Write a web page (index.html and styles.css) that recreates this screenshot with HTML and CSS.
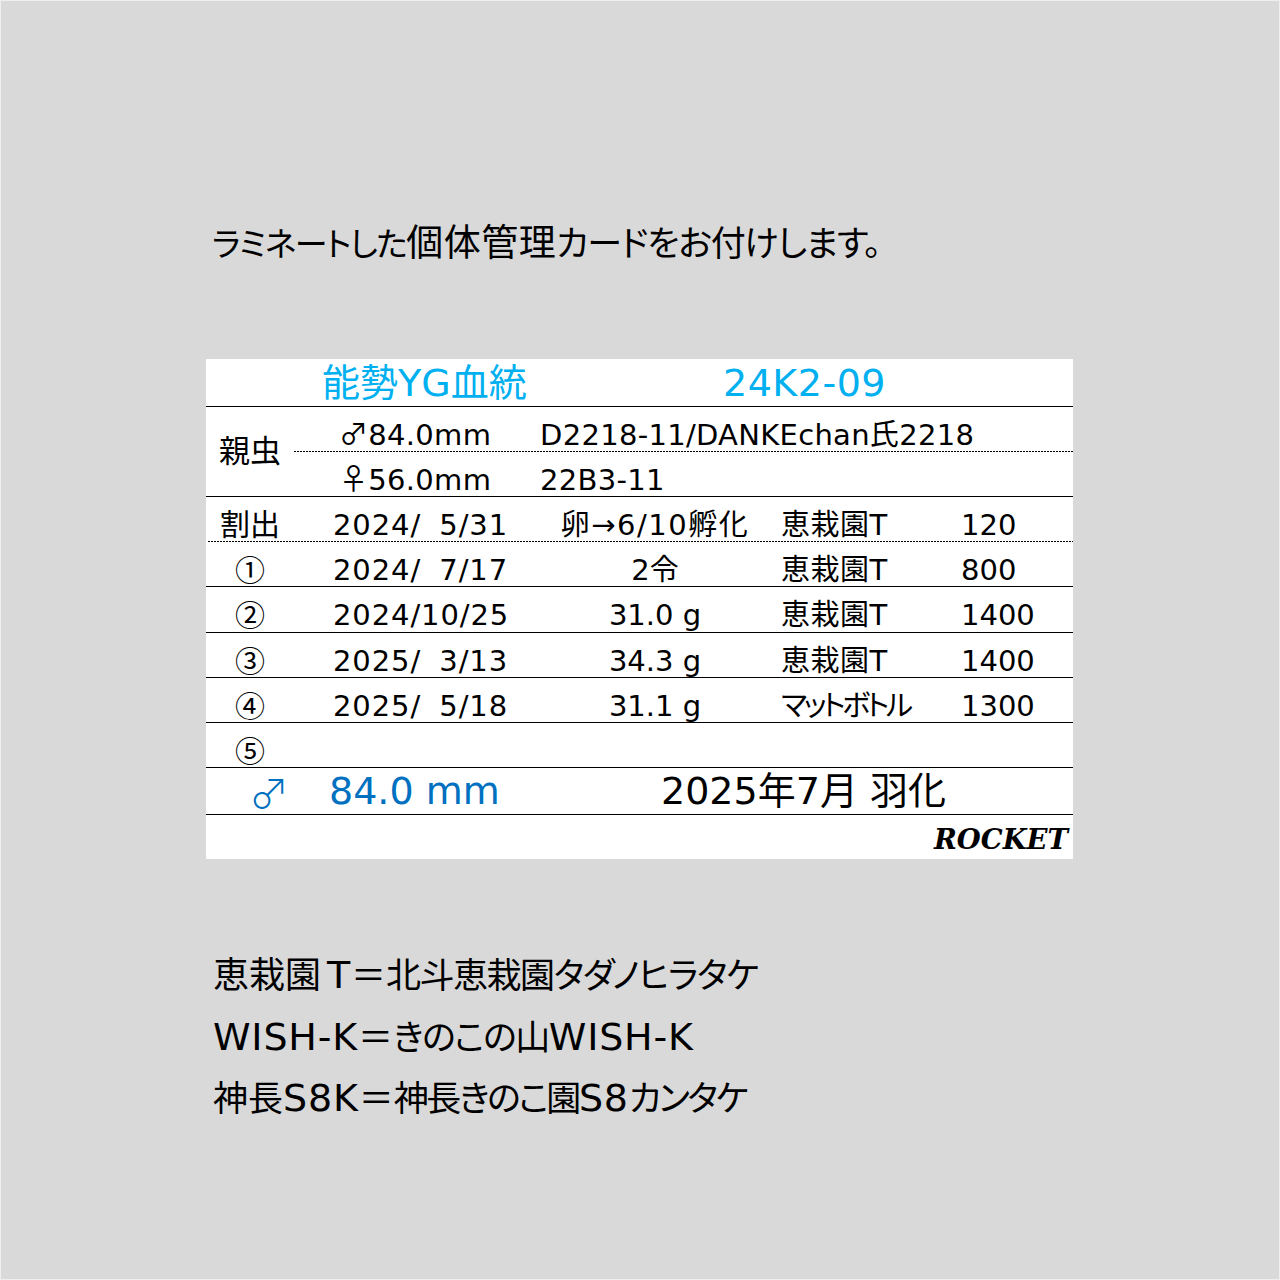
FILE: index.html
```html
<!DOCTYPE html>
<html lang="ja">
<head>
<meta charset="utf-8">
<title>個体管理カード</title>
<link rel="stylesheet" href="styles.css">
</head>
<body>
<main class="page">
  <p class="lead"><span class="lead-kana">ラミネートした</span><span class="lead-kanji">個体管理</span>カードをお付けします。</p>
  <section class="card">
    <div class="row row-head">
      <div class="head-name">能勢YG血統</div>
      <div class="head-id">24K2-09</div>
    </div>
    <div class="parents">
      <div class="parents-label">親虫</div>
      <div class="parents-list">
        <div class="parent parent-dotted"><span class="parent-size"><span class="sex">♂</span>84.0mm</span><span class="parent-id">D2218-11/DANKEchan氏2218</span></div>
        <div class="parent"><span class="parent-size"><span class="sex">♀</span>56.0mm</span><span class="parent-id">22B3-11</span></div>
      </div>
    </div>
    <div class="row row-dotted">
      <div class="c-label">割出</div><div class="c-date">2024/  5/31</div><div class="c-note c-note-long">卵→6/10孵化</div><div class="c-food">恵栽園T</div><div class="c-size">120</div>
    </div>
    <div class="row">
      <div class="c-num">①</div><div class="c-date">2024/  7/17</div><div class="c-note">2令</div><div class="c-food">恵栽園T</div><div class="c-size">800</div>
    </div>
    <div class="row row-wide">
      <div class="c-num">②</div><div class="c-date">2024/10/25</div><div class="c-note">31.0 g</div><div class="c-food">恵栽園T</div><div class="c-size">1400</div>
    </div>
    <div class="row">
      <div class="c-num">③</div><div class="c-date">2025/  3/13</div><div class="c-note">34.3 g</div><div class="c-food">恵栽園T</div><div class="c-size">1400</div>
    </div>
    <div class="row">
      <div class="c-num">④</div><div class="c-date">2025/  5/18</div><div class="c-note">31.1 g</div><div class="c-food c-food-kana">マットボトル</div><div class="c-size">1300</div>
    </div>
    <div class="row">
      <div class="c-num">⑤</div>
    </div>
    <div class="row row-result">
      <div class="result-sex">♂</div>
      <div class="result-size">84.0 mm</div>
      <div class="result-date">2025年7月 羽化</div>
    </div>
    <div class="card-foot"><span class="brand">ROCKET</span></div>
  </section>
  <div class="notes">
    <p><span class="spaced">恵栽園</span><span class="latin">T</span><span class="eq">＝</span><span class="kana">北斗恵栽園タダノヒラタケ</span></p>
    <p><span class="latin">WISH-K</span><span class="eq">＝</span><span class="kana">きのこの山</span><span class="latin">WISH-K</span></p>
    <p>神長<span class="latin">S8K</span><span class="eq">＝</span><span class="kana kana-tight">神長きのこ園</span><span class="latin">S8</span><span class="kana kana-tight">カンタケ</span></p>
  </div>
</main>
</body>
</html>
```
FILE: styles.css
```css
* { box-sizing: border-box; }
html, body { margin: 0; padding: 0; }
body {
  font-family: "DejaVu Sans", "Noto Sans CJK JP", sans-serif;
  font-feature-settings: "palt";
  color: #000;
}
p { margin: 0; }
.page {
  width: 1280px;
  height: 1280px;
  background: #d9d9d9;
  border: 1px solid #efefef;
  padding: 217px 0 0 205px;
  overflow: hidden;
}
.lead {
  font-size: 35px;
  line-height: 52px;
  height: 52px;
  padding-left: 6px;
  letter-spacing: -1.2px;
  white-space: nowrap;
}
.lead-kana { font-size: 33px; letter-spacing: -1.5px; line-height: 1; }
.lead-kanji { font-size: 37px; letter-spacing: 0.5px; line-height: 1; }
.card {
  width: 867px;
  height: 500px;
  margin-top: 89px;
  background: #fff;
  font-size: 29px;
}
.row {
  display: grid;
  grid-template-columns: 127px 196px 252px 180px 112px;
  height: 45px;
  padding-top: 13px;
  line-height: 30px;
  border-bottom: 1px solid #000;
  white-space: pre;
}
.row-wide { height: 46px; }
.row-dotted {
  border-bottom: 0;
  background: repeating-linear-gradient(90deg, #000 0 2px, transparent 2px 3px) 2px 100% / 100% 1px no-repeat;
}
.row-head {
  grid-template-columns: 517px 350px;
  height: 48px;
  padding-top: 0;
  line-height: 48px;
  font-size: 38px;
  color: #00b0f0;
}
.head-name { padding-left: 116px; }
.head-id { letter-spacing: 0.5px; }
.parents {
  display: grid;
  grid-template-columns: 88px 1fr;
  height: 90px;
  border-bottom: 1px solid #000;
}
.parents-label {
  align-self: center;
  text-align: center;
  font-size: 31px;
  padding-bottom: 8px;
}
.parent {
  display: grid;
  grid-template-columns: 247px 1fr;
  height: 45px;
  padding-top: 13px;
  line-height: 30px;
  padding-left: 46px;
}
.parent-dotted {
  background: repeating-linear-gradient(90deg, #000 0 2px, transparent 2px 3px) 0 100% / 100% 1px no-repeat;
}
.parent-size { letter-spacing: 0.3px; margin-top: -2px; margin-left: -1px; }
.parent-id {
  margin-left: -47px;
  letter-spacing: 0.3px;
  white-space: nowrap;
}
.sex {
  font-family: "Noto Sans CJK JP", sans-serif;
  font-feature-settings: normal;
  line-height: 1;
}
.c-num {
  width: 88px;
  text-align: center;
  font-size: 30px;
  line-height: 26px;
  font-family: "Noto Sans CJK JP", sans-serif;
  font-feature-settings: normal;
}
.c-label {
  width: 88px;
  text-align: center;
  font-size: 30px;
}
.c-date { letter-spacing: 0.9px; word-spacing: -1px; }
.c-note { text-align: center; }
.c-note-long { letter-spacing: 1.5px; }
.c-food { letter-spacing: 0.5px; }
.c-food-kana { letter-spacing: -3.3px; }
.row-result {
  grid-template-columns: 123px 332px 412px;
  height: 47px;
  padding-top: 0;
  line-height: 46px;
  font-size: 38px;
}
.result-sex {
  text-align: right;
  padding-right: 40px;
  color: #0070c0;
  font-family: "Noto Sans CJK JP", sans-serif;
  font-feature-settings: normal;
  font-weight: 300;
  font-size: 40px;
}
.result-size { color: #0070c0; }
.card-foot {
  display: flex;
  justify-content: flex-end;
  height: 44px;
  line-height: 48px;
  padding-right: 5px;
}
.brand {
  font-family: "DejaVu Serif", serif;
  font-weight: 700;
  font-style: italic;
  font-size: 27.5px;
}
.notes {
  margin-top: 87px;
  padding-left: 7px;
  font-size: 35px;
  line-height: 61.5px;
  white-space: nowrap;
}
.notes p { height: 61.5px; }
.spaced { font-size: 36px; margin-right: 6px; line-height: 1; }
.latin { font-size: 38px; letter-spacing: 0.8px; line-height: 1; }
.eq { font-feature-settings: normal; }
.kana { letter-spacing: -1.5px; }
.kana-tight { letter-spacing: -2.4px; }
```
